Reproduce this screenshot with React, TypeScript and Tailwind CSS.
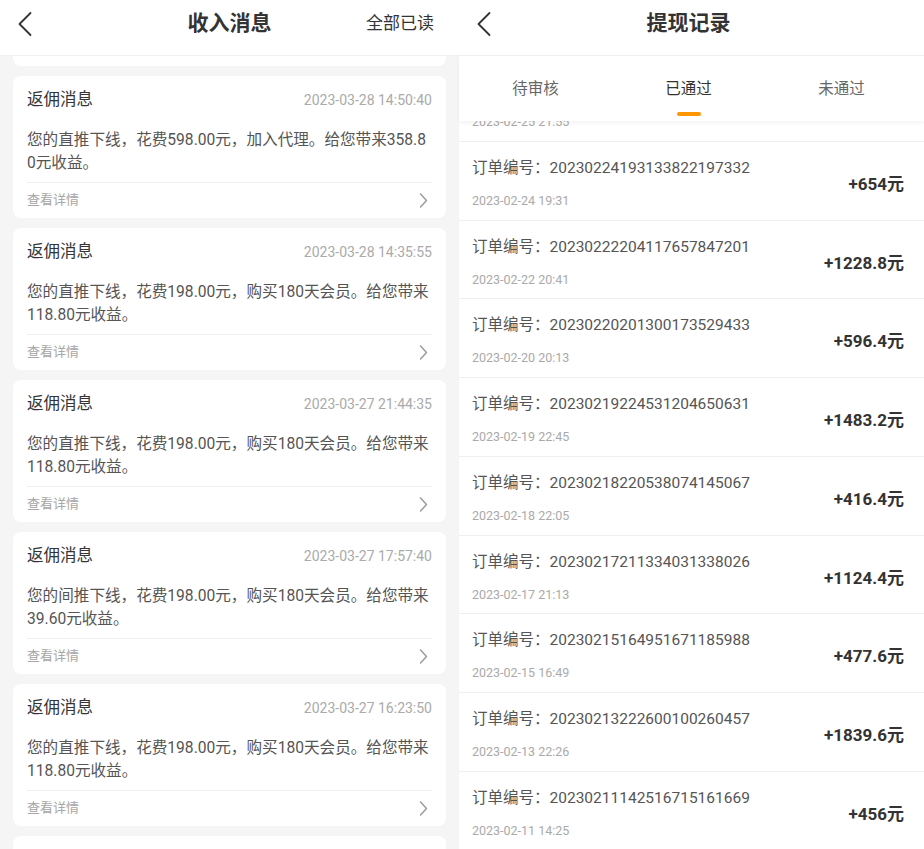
import React from 'react';

const FONT = "font-['Roboto','Noto_Sans_CJK_SC',sans-serif]";

type Msg = { time: string; lines: string[] };

const messages: Msg[] = [
  { time: '2023-03-28 15:02:11', lines: ['您的直推下线，花费198.00元，购买180天会员。给您带来', '118.80元收益。'] },
  { time: '2023-03-28 14:50:40', lines: ['您的直推下线，花费598.00元，加入代理。给您带来358.8', '0元收益。'] },
  { time: '2023-03-28 14:35:55', lines: ['您的直推下线，花费198.00元，购买180天会员。给您带来', '118.80元收益。'] },
  { time: '2023-03-27 21:44:35', lines: ['您的直推下线，花费198.00元，购买180天会员。给您带来', '118.80元收益。'] },
  { time: '2023-03-27 17:57:40', lines: ['您的间推下线，花费198.00元，购买180天会员。给您带来', '39.60元收益。'] },
  { time: '2023-03-27 16:23:50', lines: ['您的直推下线，花费198.00元，购买180天会员。给您带来', '118.80元收益。'] },
  { time: '2023-03-27 15:10:02', lines: ['您的直推下线，花费198.00元，购买180天会员。给您带来', '118.80元收益。'] },
];

const records = [
  { no: '20230225215544190237781', date: '2023-02-25 21:55', amount: '+512元' },
  { no: '20230224193133822197332', date: '2023-02-24 19:31', amount: '+654元' },
  { no: '20230222204117657847201', date: '2023-02-22 20:41', amount: '+1228.8元' },
  { no: '20230220201300173529433', date: '2023-02-20 20:13', amount: '+596.4元' },
  { no: '20230219224531204650631', date: '2023-02-19 22:45', amount: '+1483.2元' },
  { no: '20230218220538074145067', date: '2023-02-18 22:05', amount: '+416.4元' },
  { no: '20230217211334031338026', date: '2023-02-17 21:13', amount: '+1124.4元' },
  { no: '20230215164951671185988', date: '2023-02-15 16:49', amount: '+477.6元' },
  { no: '20230213222600100260457', date: '2023-02-13 22:26', amount: '+1839.6元' },
  { no: '20230211142516715161669', date: '2023-02-11 14:25', amount: '+456元' },
];

const BackIcon = () => (
  <svg width="16" height="26" viewBox="0 0 16 26" fill="none">
    <polyline points="13.5,2 2.5,13 13.5,24" stroke="#333" strokeWidth="1.8" strokeLinecap="round" strokeLinejoin="round" />
  </svg>
);

const ChevronRight = () => (
  <svg width="9" height="15" viewBox="0 0 9 15" fill="none">
    <polyline points="1.5,1 7.5,7.5 1.5,14" stroke="#999" strokeWidth="1.4" strokeLinecap="round" strokeLinejoin="round" />
  </svg>
);

const MessageCard = ({ msg }: { msg: Msg }) => (
  <div className="shrink-0 h-[142px] rounded-[8px] bg-white px-[14px] pt-[15px]">
    <div className="flex h-[18px] items-center justify-between">
      <span className="text-[16.5px] text-[#333]">返佣消息</span>
      <span className="text-[14px] text-[#aaa]">{msg.time}</span>
    </div>
    <div className="mt-[20px] text-[15.6px] leading-[23px] text-[#555]">
      {msg.lines.map((l) => (
        <div key={l} className="whitespace-nowrap">{l}</div>
      ))}
    </div>
    <div className="mt-[7px] flex h-[35px] items-center justify-between border-t border-[#eeeeee] pr-[4px]">
      <span className="text-[13px] text-[#a6a6a6]">查看详情</span>
      <ChevronRight />
    </div>
  </div>
);

const IncomeMessages = () => (
  <div className="flex h-full w-[459px] shrink-0 flex-col bg-[#f5f5f5]">
    <div className="h-[56px] shrink-0 border-b border-[#f0f0f0] bg-white pt-[2px]">
      <div className="grid h-[44px] grid-cols-[1fr_auto_1fr] items-center">
        <div className="pl-[17px]">
          <BackIcon />
        </div>
        <h1 className="text-[21px] font-bold text-[#333]">收入消息</h1>
        <div className="pr-[25px] text-right text-[17px] text-[#333]">全部已读</div>
      </div>
    </div>
    <div className="flex-1 overflow-hidden">
      <div className="-mt-[132px] flex flex-col gap-[10px] px-[13px]">
        {messages.map((m, i) => (
          <MessageCard key={i} msg={m} />
        ))}
      </div>
    </div>
  </div>
);

const WithdrawRecords = () => (
  <div className="flex h-full w-[465px] shrink-0 flex-col bg-white">
    <div className="h-[56px] shrink-0 border-b border-[#f0f0f0] bg-white pr-[6px] pt-[2px]">
      <div className="grid h-[44px] grid-cols-[1fr_auto_1fr] items-center">
        <div className="pl-[17px]">
          <BackIcon />
        </div>
        <h1 className="text-[21px] font-bold text-[#333]">提现记录</h1>
        <div />
      </div>
    </div>
    <div className="relative z-10 grid h-[65px] shrink-0 grid-cols-3 bg-white pr-[6px] shadow-[0_2px_4px_rgba(0,0,0,0.05)]">
      {['待审核', '已通过', '未通过'].map((t) => (
        <div key={t} className="flex flex-col items-center pt-[22px]">
          <span className={`text-[15.5px] leading-[22px] ${t === '已通过' ? 'text-[#333]' : 'text-[#666]'}`}>{t}</span>
          {t === '已通过' && <span className="mt-[12px] h-[4px] w-[24px] rounded-full bg-[#ff9500]" />}
        </div>
      ))}
    </div>
    <div className="flex-1 overflow-hidden">
      <div className="-mt-[58px]">
        {records.map((r) => (
          <div key={r.no} className="flex h-[78.75px] items-start justify-between border-b border-[#efefef] pl-[13px] pr-[20px]">
            <div className="pt-[16px]">
              <div className="h-[20px] text-[15.5px] leading-[20px] text-[#555]">订单编号：{r.no}</div>
              <div className="mt-[15px] text-[12.5px] leading-[16px] text-[#aaa]">{r.date}</div>
            </div>
            <div className="pt-[33px] text-[17px] font-bold leading-[18px] text-[#333]">{r.amount}</div>
          </div>
        ))}
      </div>
    </div>
  </div>
);

export default function App() {
  return (
    <div className={`flex h-[849px] w-[924px] overflow-hidden bg-[#f5f5f5] ${FONT}`}>
      <IncomeMessages />
      <WithdrawRecords />
    </div>
  );
}
